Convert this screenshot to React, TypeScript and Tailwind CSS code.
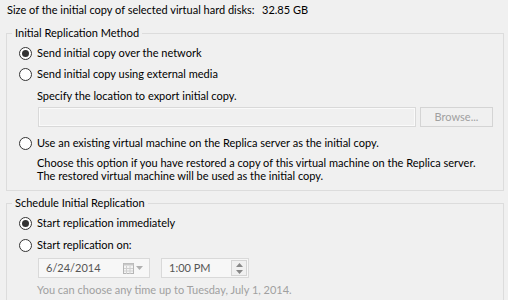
import React from "react";

function Radio({ checked }: { checked?: boolean }) {
  return (
    <span className="flex h-[13px] w-[13px] shrink-0 items-center justify-center rounded-full border border-[#333333] bg-white">
      {checked ? <span className="h-[7px] w-[7px] rounded-full bg-[#333333]" /> : null}
    </span>
  );
}

function RadioRow({ checked, label, className }: { checked?: boolean; label: string; className?: string }) {
  return (
    <div className={"flex h-[16px] items-center " + (className ?? "")}>
      <Radio checked={checked} />
      <span className="ml-[5px] whitespace-nowrap">{label}</span>
    </div>
  );
}

export default function App() {
  return (
    <div
      className="h-[300px] w-[508px] overflow-hidden bg-[#f0f0f0] text-[11px] leading-[16px] text-black"
      style={{ fontFamily: 'Lato, "Segoe UI", sans-serif' }}
    >
      <div className="flex pl-[7px] pt-[2px]">
        <span className="w-[255px] whitespace-nowrap">Size of the initial copy of selected virtual hard disks:</span>
        <span>32.85 GB</span>
      </div>

      <fieldset className="ml-[6px] mt-[7px] w-[498px] border border-[#dcdcdc] px-0 pb-[8px]">
        <legend className="ml-[5px] px-[3px]">Initial Replication Method</legend>
        <div className="flex flex-col pl-[12px]">
          <RadioRow checked label="Send initial copy over the network" className="mt-[4px]" />
          <RadioRow label="Send initial copy using external media" className="mt-[5px]" />
          <div className="ml-[18px] mt-[6px] h-[16px] whitespace-nowrap">Specify the location to export initial copy.</div>
          <div className="ml-[19px] mt-[3px] flex h-[20px] items-center">
            <div className="h-[20px] w-[378px] border border-[#d9d9d9] bg-[#f0f0f0] shadow-[inset_0_0_0_1px_#fafafa]" />
            <div className="ml-[4px] flex h-[20px] w-[73px] items-center justify-center border border-[#d4d4d4] bg-[#f0f0f0] text-[#a0a0a0]">
              Browse...
            </div>
          </div>
          <RadioRow label="Use an existing virtual machine on the Replica server as the initial copy." className="mt-[8px]" />
          <div className="ml-[18px] mt-[5px] whitespace-nowrap leading-[13px]">
            <div>Choose this option if you have restored a copy of this virtual machine on the Replica server.</div>
            <div>The restored virtual machine will be used as the initial copy.</div>
          </div>
        </div>
      </fieldset>

      <fieldset className="ml-[6px] mt-[4px] w-[498px] border border-[#dcdcdc] px-0 pb-[10px]">
        <legend className="ml-[5px] px-[3px]">Schedule Initial Replication</legend>
        <div className="flex flex-col pl-[12px]">
          <RadioRow checked label="Start replication immediately" className="mt-[4px]" />
          <RadioRow label="Start replication on:" className="mt-[6px]" />
          <div className="ml-[19px] mt-[5px] flex h-[20px] items-center">
            <div className="flex h-[20px] w-[112px] items-center border border-[#d9d9d9] bg-[#f7f7f7] pl-[7px] text-[#555555]">
              <span className="flex-1">6/24/2014</span>
              <svg width="11" height="11" viewBox="0 0 11 11" className="mr-[2px]">
                <rect x="0.5" y="0.5" width="10" height="10" fill="#f4f4f4" stroke="#b5b5b5" />
                <rect x="0.5" y="0.5" width="10" height="2" fill="#c8c8c8" />
                <path d="M3.5 3v8M7 3v8M1 5.5h9M1 8h9" stroke="#d0d0d0" strokeWidth="1" />
              </svg>
              <svg width="7" height="4" viewBox="0 0 7 4" className="mr-[6px]">
                <path d="M0 0h7L3.5 4z" fill="#b0b0b0" />
              </svg>
            </div>
            <div className="ml-[11px] flex h-[20px] w-[88px] items-center border border-[#d9d9d9] bg-[#f7f7f7] pl-[7px] text-[#555555]">
              <span className="flex-1">1:00 PM</span>
              <div className="mr-[1px] flex h-[16px] w-[16px] flex-col items-center justify-center gap-[3px] border border-[#d4d4d4] bg-[#f0f0f0]">
                <svg width="7" height="4" viewBox="0 0 7 4">
                  <path d="M0 4h7L3.5 0z" fill="#888888" />
                </svg>
                <svg width="7" height="4" viewBox="0 0 7 4">
                  <path d="M0 0h7L3.5 4z" fill="#888888" />
                </svg>
              </div>
            </div>
          </div>
          <div className="ml-[18px] mt-[4px] whitespace-nowrap text-[#a0a0a0]">
            You can choose any time up to Tuesday, July 1, 2014.
          </div>
        </div>
      </fieldset>
    </div>
  );
}
